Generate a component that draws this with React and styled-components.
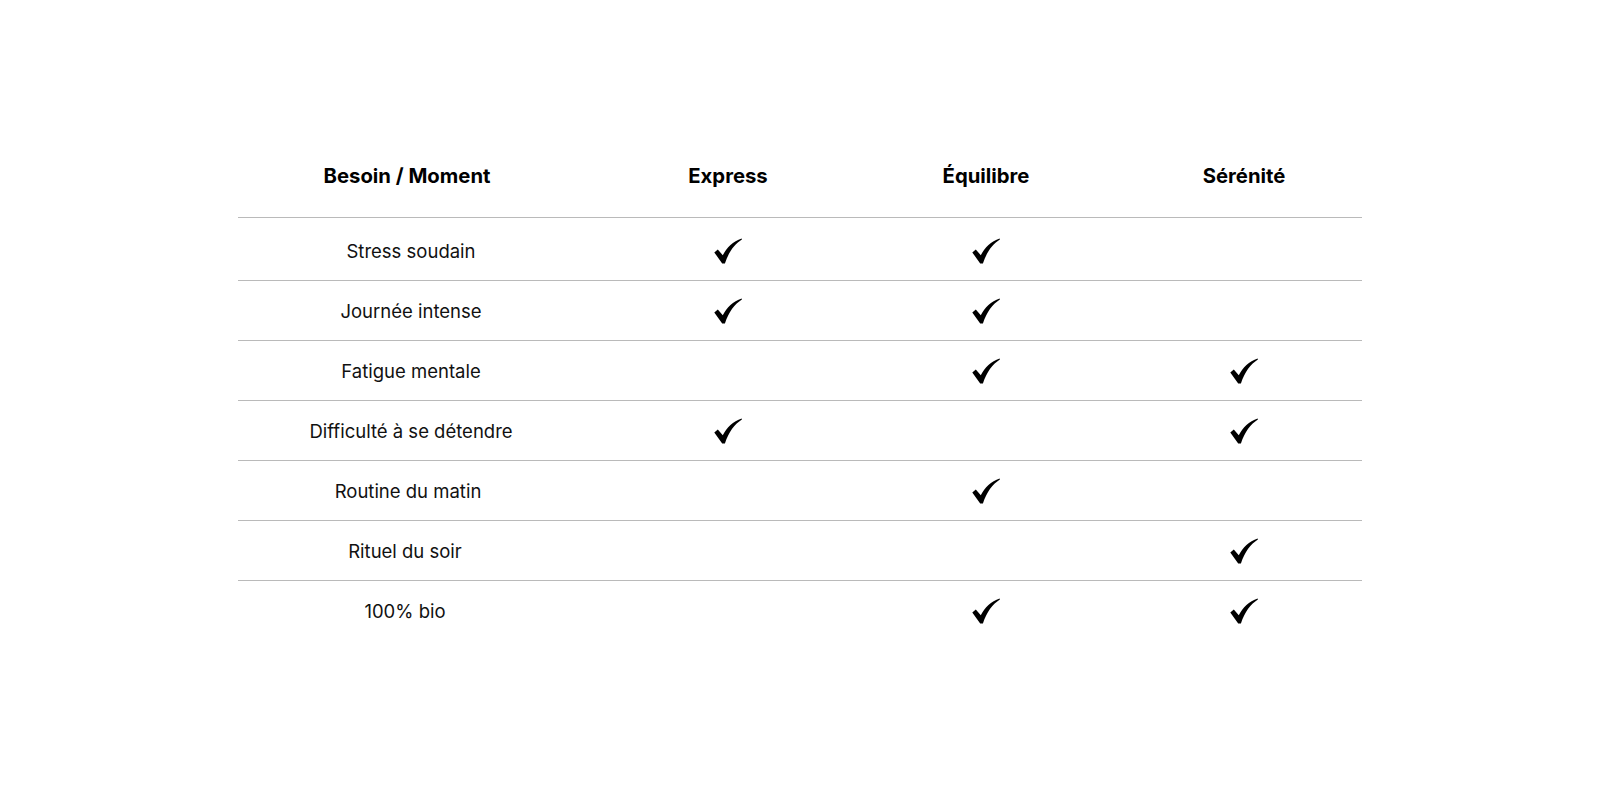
import React from "react";
import styled, { createGlobalStyle } from "styled-components";

const Global = createGlobalStyle`
  html, body { margin: 0; padding: 0; background: #fff; }
  body { font-family: Inter, "Noto Sans", sans-serif; color: #111; }
`;

const Page = styled.main`
  padding-top: 134px;
`;

const Table = styled.div`
  width: 1124px;
  margin: 0 auto;
`;

const Row = styled.div`
  display: grid;
  grid-template-columns: 348px 232px 232px 232px;
  column-gap: 26px;
  align-items: center;
  height: ${(p) => p.$h}px;
  padding-top: ${(p) => p.$pt || 0}px;
  box-sizing: border-box;
  border-bottom: ${(p) => (p.$last ? "none" : "1px solid #bababa")};
`;

const HeadCell = styled.div`
  text-align: center;
  font-size: 20.3px;
  font-weight: 700;
  color: #000;
  padding-right: ${(p) => (p.$first ? "10px" : "0")};
`;

const LabelCell = styled.div`
  text-align: center;
  font-size: 18.5px;
  font-weight: 400;
  color: #111;
  padding-right: ${(p) => p.$shift || 2}px;
`;

const MarkCell = styled.div`
  display: flex;
  justify-content: center;
  align-items: center;
`;

const CheckSvg = styled.svg`
  display: block;
  width: 28px;
  height: 26px;
`;

function Check() {
  return (
    <CheckSvg viewBox="0 0 28 26" aria-label="oui">
      <path
        d="M0.3 14.4 L3.8 11.4 L8.8 17.2 C12.8 9.4 19 3.4 27.7 0.4 L27.9 1.5 C20.6 6.2 14.8 13.6 10.9 25.5 L8.2 25.5 Z"
        fill="#000"
      />
    </CheckSvg>
  );
}

const columns = ["Express", "Équilibre", "Sérénité"];

const rows = [
  { label: "Stress soudain", marks: [true, true, false], shift: 0 },
  { label: "Journée intense", marks: [true, true, false], shift: 0 },
  { label: "Fatigue mentale", marks: [false, true, true], shift: 0 },
  { label: "Difficulté à se détendre", marks: [true, false, true], shift: 0 },
  { label: "Routine du matin", marks: [false, true, false], shift: 8 },
  { label: "Rituel du soir", marks: [false, false, true], shift: 14 },
  { label: "100% bio", marks: [false, true, true], shift: 14 },
];

export default function App() {
  return (
    <Page>
      <Global />
      <Table>
        <Row $h={84}>
          <HeadCell $first>Besoin / Moment</HeadCell>
          {columns.map((c) => (
            <HeadCell key={c}>{c}</HeadCell>
          ))}
        </Row>
        {rows.map((r, i) => (
          <Row
            key={r.label}
            $h={i === 0 ? 63 : 60}
            $pt={i === 0 ? 3 : 0}
            $last={i === rows.length - 1}
          >
            <LabelCell $shift={r.shift}>{r.label}</LabelCell>
            {r.marks.map((m, j) => (
              <MarkCell key={j}>{m ? <Check /> : null}</MarkCell>
            ))}
          </Row>
        ))}
      </Table>
    </Page>
  );
}
